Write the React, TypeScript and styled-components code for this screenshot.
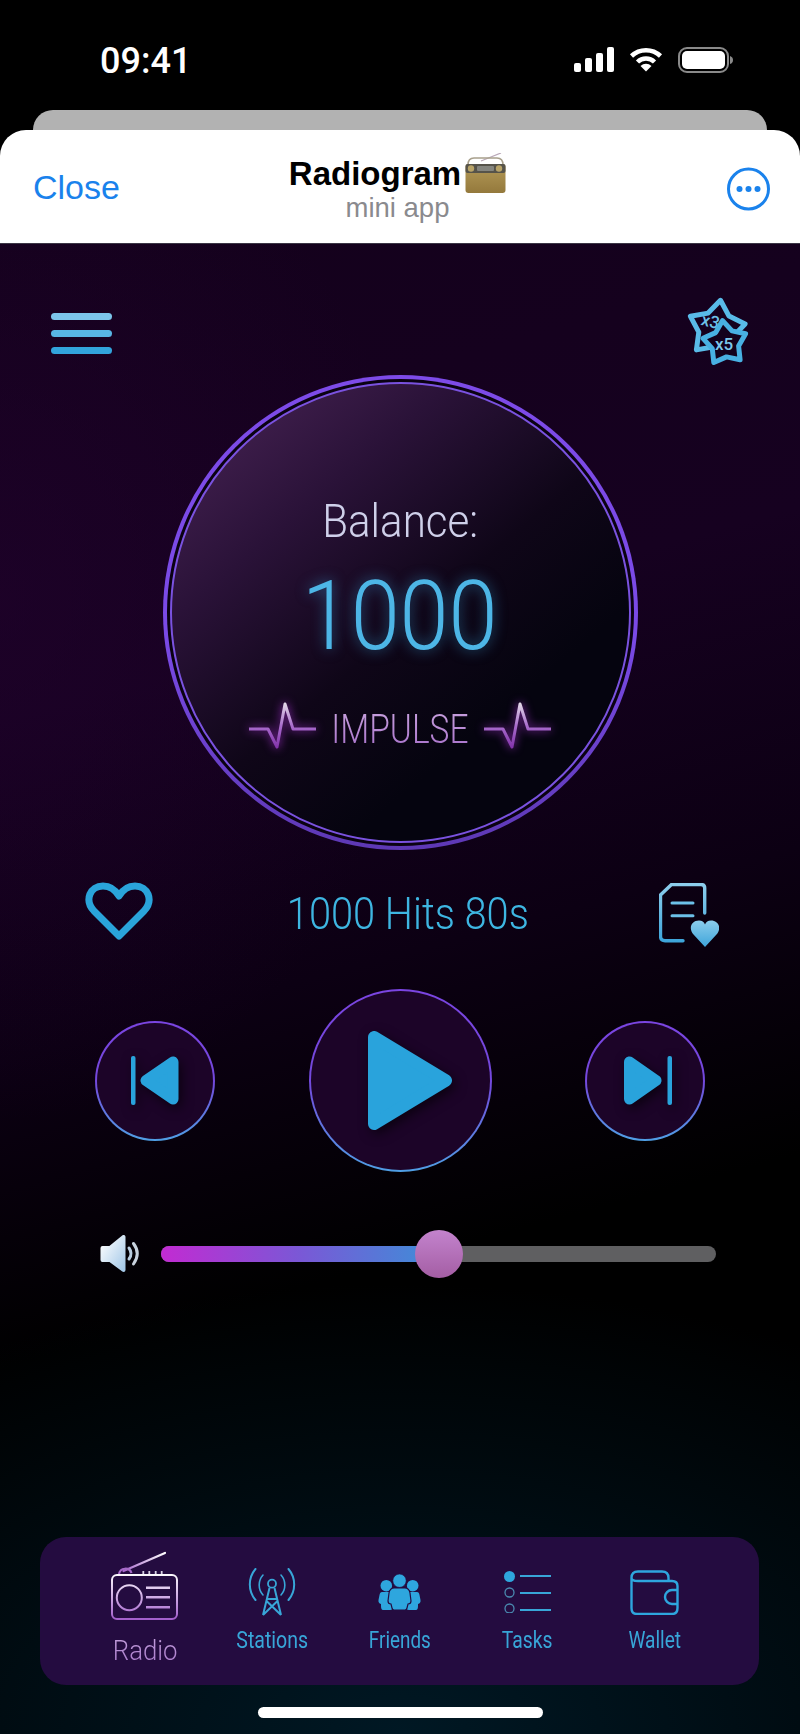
import React from "react";
import styled, { createGlobalStyle } from "styled-components";

const NARROW = `Roboto, "Liberation Sans", sans-serif`;
const SYSTEM = `"Liberation Sans", Arial, sans-serif`;

const Global = createGlobalStyle`
  html, body { margin: 0; padding: 0; background: #000; }
  * { box-sizing: border-box; }
`;

const Page = styled.div`
  width: 800px;
  height: 1734px;
  display: flex;
  flex-direction: column;
  background: #000;
  overflow: hidden;
`;

const StatusBar = styled.div`
  height: 110px;
  flex: none;
  display: flex;
  justify-content: space-between;
  align-items: flex-start;
  padding: 40px 67px 0 100px;
`;
const Clock = styled.div`
  font: 500 36px/42px ${NARROW};
  color: #fff;
`;
const StatusIcons = styled.div`
  display: flex;
  gap: 15px;
  padding-top: 7px;
`;
const BackSheet = styled.div`
  height: 20px;
  flex: none;
  margin: 0 33px;
  background: #b2b2b2;
  border-radius: 20px 20px 0 0;
`;
const Header = styled.header`
  height: 114px;
  flex: none;
  background: #fff;
  border-radius: 26px 26px 0 0;
  display: grid;
  grid-template-columns: 1fr auto 1fr;
  align-items: center;
  padding: 0 30px 0 33px;
  border-bottom: 1px solid #3b3645;
`;
const CloseLabel = styled.div`
  font: 400 34px/40px ${SYSTEM};
  color: #1a82ec;
`;
const TitleBlock = styled.div`
  display: flex;
  flex-direction: column;
  align-items: center;
  padding: 3px 8px 0 0;
`;
const TitleRow = styled.div`
  display: flex;
  align-items: flex-end;
  gap: 4px;
  font: 700 33px/38px ${SYSTEM};
  color: #000;
`;
const Subtitle = styled.div`
  font: 400 27.5px/30px ${SYSTEM};
  color: #8a8a8e;
`;
const MoreSlot = styled.div`
  display: flex;
  justify-content: flex-end;
  padding-top: 4px;
`;

const Main = styled.main`
  flex: 1;
  display: flex;
  flex-direction: column;
  background:
    radial-gradient(ellipse 800px 450px at 50% 100%, #001824 0%, rgba(0, 24, 36, 0) 100%),
    radial-gradient(ellipse 420px 520px at 0% 24%, rgba(34, 2, 46, 0.55) 0%, rgba(34, 2, 46, 0) 100%),
    linear-gradient(165deg, #14011c 0%, #160120 28%, #0c0013 48%, #000 66%);
`;
const TopBar = styled.div`
  display: flex;
  justify-content: space-between;
  align-items: center;
  padding: 53px 52px 0 51px;
`;
const Burger = styled.div`
  width: 61px;
  margin-top: 2px;
  display: flex;
  flex-direction: column;
  gap: 10px;
`;
const BurgerLine = styled.div<{ $c: string }>`
  height: 7px;
  border-radius: 4px;
  background: ${(p) => p.$c};
`;

const Dial = styled.div`
  width: 475px;
  height: 475px;
  margin: 8px auto 0;
  flex: none;
  border-radius: 50%;
  padding: 3px;
  border: 4px solid transparent;
  background:
    linear-gradient(#0a0212, #0a0212) padding-box,
    linear-gradient(180deg, #7d4be8 0%, #7a4ae6 55%, #5d38b4 100%) border-box;
`;
const Face = styled.div`
  width: 100%;
  height: 100%;
  border-radius: 50%;
  border: 2px solid #7a52df;
  background: linear-gradient(140deg, #42204f 8%, #2a1238 28%, #0f0618 52%, #05040f 72%);
  display: flex;
  flex-direction: column;
  align-items: center;
  padding-top: 110px;
`;
const Narrow = styled.span<{ $sx: number }>`
  display: inline-block;
  white-space: nowrap;
  font-family: ${NARROW};
  font-weight: 300;
  transform: scaleX(${(p) => p.$sx});
`;
const BalanceLabel = styled(Narrow)`
  font-size: 46px;
  line-height: 54px;
  color: #cfd0ea;
`;
const BalanceValue = styled(Narrow)`
  font-size: 97px;
  line-height: 114px;
  margin-top: 11px;
  color: #4db6e6;
  text-shadow: 0 0 14px rgba(60, 170, 230, 0.55);
`;
const ImpulseRow = styled.div`
  display: flex;
  gap: 2px;
  margin-top: 33px;
  height: 47px;
`;
const ImpulseLabel = styled(Narrow)`
  font-size: 40px;
  line-height: 47px;
  background: linear-gradient(180deg, #cba6df, #a56dc9);
  -webkit-background-clip: text;
  background-clip: text;
  color: transparent;
`;
const PulseIcon = styled.svg`
  width: 67px;
  height: 50px;
  margin-top: -5px;
  overflow: visible;
  filter: drop-shadow(0 0 5px rgba(170, 50, 215, 0.9));
`;

const TrackRow = styled.div`
  display: flex;
  justify-content: space-between;
  align-items: flex-start;
  margin-top: 32px;
  height: 64px;
  padding: 0 81px 0 85px;
`;
const TrackTitle = styled(Narrow)`
  font-size: 44px;
  line-height: 52px;
  margin: 6px 0 0 3px;
  color: #3eb6e2;
`;
const DocSlot = styled.div`
  margin-top: 1px;
`;

const Controls = styled.div`
  display: flex;
  justify-content: space-between;
  align-items: center;
  margin-top: 43px;
  padding: 0 95px;
`;
const RoundButton = styled.div<{ $size: number }>`
  width: ${(p) => p.$size}px;
  height: ${(p) => p.$size}px;
  flex: none;
  border-radius: 50%;
  border: 2px solid transparent;
  background:
    linear-gradient(#1c0428, #1c0428) padding-box,
    linear-gradient(180deg, #7b45e2 0%, #7348dc 50%, #4f9fe4 100%) border-box;
  display: flex;
  align-items: center;
  justify-content: center;
`;
const PressIcon = styled.svg<{ $shift: number }>`
  margin-left: ${(p) => p.$shift}px;
  overflow: visible;
  filter: drop-shadow(3px 4px 6px rgba(0, 0, 0, 0.6));
`;

const VolumeRow = styled.div`
  display: flex;
  align-items: center;
  gap: 20px;
  margin-top: 57px;
  height: 49px;
  padding: 0 84px 0 100px;
`;
const VolumeTrack = styled.div`
  position: relative;
  flex: 1;
  height: 16px;
  border-radius: 8px;
  background: #5f5f61;
`;
const VolumeFill = styled.div`
  height: 100%;
  border-radius: 8px 0 0 8px;
  background: linear-gradient(90deg, #c22bd2 0%, #7a58d6 50%, #3d8fd8 100%);
`;
const VolumeThumb = styled.div`
  position: absolute;
  top: 50%;
  width: 48px;
  height: 48px;
  margin: -24px 0 0 -24px;
  border-radius: 50%;
  background: linear-gradient(180deg, #c383cd 0%, #a45ea4 100%);
`;

const BottomNav = styled.nav`
  margin: auto 41px 0 40px;
  height: 148px;
  flex: none;
  border-radius: 26px;
  background: #240c40;
  display: grid;
  grid-template-columns: repeat(5, 127.5px);
  padding-left: 41px;
`;
const NavItem = styled.div<{ $active?: boolean }>`
  display: flex;
  flex-direction: column;
  align-items: center;
  padding-top: ${(p) => (p.$active ? 16 : 31)}px;
`;
const NavIconBox = styled.div`
  height: 48px;
  display: flex;
  align-items: center;
  justify-content: center;
`;
const ActiveIconBox = styled.div`
  height: 66px;
`;
const NavLabel = styled(Narrow)`
  font-size: 23px;
  font-weight: 400;
  line-height: 27px;
  margin-top: 11px;
  color: #38a6d8;
`;
const ActiveNavLabel = styled(Narrow)`
  font-size: 28px;
  line-height: 33px;
  margin-top: 15px;
  background: linear-gradient(180deg, #c6a4de, #a574c8);
  -webkit-background-clip: text;
  background-clip: text;
  color: transparent;
`;
const HomeIndicator = styled.div`
  width: 285px;
  height: 11px;
  flex: none;
  margin: 22px auto 16px;
  border-radius: 6px;
  background: #fff;
`;

const starPoints = (cx: number, cy: number, r: number, rot: number) => {
  const pts: string[] = [];
  for (let i = 0; i < 10; i++) {
    const rad = i % 2 === 0 ? r : r * 0.62;
    const a = ((rot + i * 36 - 90) * Math.PI) / 180;
    pts.push(`${(cx + rad * Math.cos(a)).toFixed(1)},${(cy + rad * Math.sin(a)).toFixed(1)}`);
  }
  return pts.join(" ");
};

const SignalIcon = () => (
  <svg width="40" height="25" viewBox="0 0 40 25">
    <rect x="0" y="16" width="7" height="9" rx="2" fill="#fff" />
    <rect x="11" y="11" width="7" height="14" rx="2" fill="#fff" />
    <rect x="22" y="6" width="7" height="19" rx="2" fill="#fff" />
    <rect x="33" y="0" width="7" height="25" rx="2" fill="#fff" />
  </svg>
);
const WifiIcon = () => (
  <svg width="34" height="25" viewBox="0 0 34 25" fill="none">
    <path d="M2.5 9 A 21 21 0 0 1 31.5 9" stroke="#fff" strokeWidth="4.5" />
    <path d="M8.5 15 A 12 12 0 0 1 25.5 15" stroke="#fff" strokeWidth="4.5" />
    <path d="M17 24.5 L11.5 19 A 8 8 0 0 1 22.5 19 Z" fill="#fff" />
  </svg>
);
const BatteryIcon = () => (
  <svg width="55" height="26" viewBox="0 0 55 26">
    <rect x="1" y="1" width="49" height="24" rx="8" fill="none" stroke="#8a8a8a" strokeWidth="2" />
    <rect x="4" y="4" width="43" height="18" rx="5" fill="#fff" />
    <path d="M52 9 Q55 10 55 13 Q55 16 52 17 Z" fill="#8a8a8a" />
  </svg>
);
const RadioEmoji = () => (
  <svg width="41" height="40" viewBox="0 0 41 40">
    <defs>
      <linearGradient id="emo" x1="0" y1="0" x2="0" y2="1">
        <stop offset="0" stopColor="#b49a58" />
        <stop offset="1" stopColor="#94793c" />
      </linearGradient>
    </defs>
    <path d="M16 8 L36 0" stroke="#b9a8b8" strokeWidth="1.3" />
    <path d="M3 12 Q3 5 9 5 H32 Q38 5 38 12" fill="none" stroke="#a8a08c" strokeWidth="1.6" />
    <rect x="0.5" y="11" width="40" height="29" rx="3" fill="url(#emo)" />
    <rect x="0.5" y="11" width="40" height="9" rx="2" fill="#56534a" />
    <circle cx="6" cy="15.5" r="3.2" fill="#b9a468" />
    <circle cx="34" cy="15.5" r="3.2" fill="#b9a468" />
    <rect x="12" y="13" width="17" height="5" rx="1" fill="#85857f" />
  </svg>
);
const MoreIcon = () => (
  <svg width="43" height="44" viewBox="0 0 43 44">
    <circle cx="21.5" cy="22" r="20" fill="none" stroke="#1a82ec" strokeWidth="3" />
    <circle cx="12.5" cy="22" r="3" fill="#1a82ec" />
    <circle cx="21.5" cy="22" r="3" fill="#1a82ec" />
    <circle cx="30.5" cy="22" r="3" fill="#1a82ec" />
  </svg>
);
const StarsIcon = () => (
  <svg width="60" height="70" viewBox="0 0 60 70" style={{ overflow: "visible" }}>
    <polygon points={starPoints(28.5, 32, 29, 8)} fill="none" stroke="#59bbe8" strokeWidth="5" strokeLinejoin="round" />
    <text x="13" y="30" fontFamily={NARROW} fontWeight="500" fontSize="17" fill="#6cc0e8" transform="rotate(14 22 26)">x3</text>
    <polygon points={starPoints(37, 46, 22.5, -6)} fill="#13011c" stroke="#48b0e2" strokeWidth="5" strokeLinejoin="round" />
    <text x="27" y="53" fontFamily={NARROW} fontWeight="500" fontSize="17" fill="#7cc8ec">x5</text>
  </svg>
);
const Pulse = ({ id }: { id: string }) => (
  <PulseIcon viewBox="0 0 67 50">
    <defs>
      <linearGradient id={id} gradientUnits="userSpaceOnUse" x1="0" y1="2" x2="0" y2="48">
        <stop offset="0" stopColor="#e4dce8" />
        <stop offset="0.5" stopColor="#a86ccc" />
        <stop offset="1" stopColor="#8030a8" />
      </linearGradient>
    </defs>
    <path d="M0 28 H19 L28 46 L36 3 L44 28 H67" fill="none" stroke={`url(#${id})`} strokeWidth="3" strokeLinejoin="round" />
  </PulseIcon>
);
const HeartIcon = () => (
  <svg width="68" height="58" viewBox="0 0 68 58">
    <path
      d="M34 54 L9 29 C-1 18 5 4 18 4 C26 4 31 9 34 14 C37 9 42 4 50 4 C63 4 69 18 59 29 Z"
      fill="none"
      stroke="#2aa4da"
      strokeWidth="7"
      strokeLinejoin="round"
    />
  </svg>
);
const DocHeartIcon = () => (
  <svg width="60" height="64" viewBox="0 0 60 64">
    <defs>
      <linearGradient id="doc" x1="0" y1="0" x2="0" y2="1">
        <stop offset="0" stopColor="#8ccdec" />
        <stop offset="1" stopColor="#3ea5da" />
      </linearGradient>
    </defs>
    <path
      d="M24 57.7 H6 Q1.5 57.7 1.5 53 V12 L12.5 1.5 H42 Q45.7 1.5 45.7 5 V30"
      fill="none"
      stroke="url(#doc)"
      strokeWidth="3.4"
      strokeLinecap="round"
    />
    <path d="M13 20 H34 M13 32.7 H34" stroke="#6cc0e8" strokeWidth="3" strokeLinecap="round" />
    <path
      d="M46 64 L34.5 51.5 C29 45 32.5 37.5 40 37.5 C43 37.5 45 39 46 41.5 C47 39 49 37.5 52 37.5 C59.5 37.5 63 45 57.5 51.5 Z"
      fill="url(#doc)"
    />
  </svg>
);
const PlayIcon = () => (
  <PressIcon $shift={20} width="86" height="101" viewBox="0 0 86 101">
    <polygon points="7,7 7,94 79,50.5" fill="#29a3dc" stroke="#29a3dc" strokeWidth="12" strokeLinejoin="round" />
  </PressIcon>
);
const PrevIcon = () => (
  <PressIcon $shift={0} width="48" height="49" viewBox="0 0 48 49">
    <rect x="0" y="0" width="4.5" height="49" rx="2" fill="#29a3dc" />
    <polygon points="42,6 42,43 15,24.5" fill="#29a3dc" stroke="#29a3dc" strokeWidth="11" strokeLinejoin="round" />
  </PressIcon>
);
const NextIcon = () => (
  <PressIcon $shift={6} width="48" height="49" viewBox="0 0 48 49">
    <rect x="43.5" y="0" width="4.5" height="49" rx="2" fill="#29a3dc" />
    <polygon points="5.5,6 5.5,43 32,24.5" fill="#29a3dc" stroke="#29a3dc" strokeWidth="11" strokeLinejoin="round" />
  </PressIcon>
);
const SpeakerIcon = () => (
  <svg width="41" height="37" viewBox="0 0 41 37" style={{ flex: "none" }}>
    <defs>
      <linearGradient id="spk" x1="0" y1="0" x2="1" y2="1">
        <stop offset="0" stopColor="#fff" />
        <stop offset="1" stopColor="#a5c9e8" />
      </linearGradient>
    </defs>
    <path d="M2.5 13 H10 L23.5 2 V35 L10 25 H2.5 Z" fill="url(#spk)" stroke="url(#spk)" strokeWidth="4" strokeLinejoin="round" />
    <path d="M29 13 Q33 18.5 29 24" fill="none" stroke="#b9cde0" strokeWidth="3" strokeLinecap="round" />
    <path d="M33.5 8.5 Q41 18.5 33.5 29" fill="none" stroke="#c8d2de" strokeWidth="3" strokeLinecap="round" />
  </svg>
);
const RadioNavIcon = () => (
  <svg width="67" height="66" viewBox="0 0 67 66" style={{ overflow: "visible" }}>
    <defs>
      <linearGradient id="radB" gradientUnits="userSpaceOnUse" x1="0" y1="20" x2="0" y2="66">
        <stop offset="0" stopColor="#fff" />
        <stop offset="1" stopColor="#a35fcc" />
      </linearGradient>
      <linearGradient id="radA" gradientUnits="userSpaceOnUse" x1="10" y1="20" x2="54" y2="0">
        <stop offset="0" stopColor="#a05cc8" />
        <stop offset="1" stopColor="#fff" />
      </linearGradient>
    </defs>
    <path d="M12.5 18 L54 0" stroke="url(#radA)" strokeWidth="2.2" strokeLinecap="round" />
    <path d="M8 21 A 6.5 6.5 0 0 1 20.5 20" fill="none" stroke="#a66ac8" strokeWidth="2.2" />
    <path d="M32.3 18 V21 M38.3 18 V21 M44.7 18 V21 M50.7 18 V21" stroke="#d8d0e4" strokeWidth="1.8" />
    <rect x="1" y="22" width="65" height="44" rx="5" fill="none" stroke="url(#radB)" strokeWidth="2" />
    <circle cx="18.3" cy="44.7" r="12.5" fill="none" stroke="url(#radB)" strokeWidth="2" />
    <path d="M35 34.7 H59 M35 44.3 H59 M35 54.3 H59" stroke="url(#radB)" strokeWidth="2.4" />
  </svg>
);
const StationsIcon = () => (
  <svg width="48" height="48" viewBox="0 0 48 48" fill="none" stroke="#38a6d8" strokeWidth="2">
    <path d="M7.5 1 A 24 24 0 0 0 7.5 32" strokeLinecap="round" />
    <path d="M40.5 1 A 24 24 0 0 1 40.5 32" strokeLinecap="round" />
    <path d="M15 7 A 15 15 0 0 0 15 27" strokeWidth="1.6" strokeLinecap="round" />
    <path d="M33 7 A 15 15 0 0 1 33 27" strokeWidth="1.6" strokeLinecap="round" />
    <circle cx="24" cy="15.7" r="4" strokeWidth="1.8" />
    <path d="M21.5 20 L15 47 M26.5 20 L33 47 M18.5 33 L33 47 M29.5 33 L15 47 M19 31 H29" strokeWidth="2" />
  </svg>
);
const FriendsIcon = () => (
  <svg width="43" height="36" viewBox="0 0 43 36" fill="#2ea6de">
    <circle cx="8.3" cy="11.7" r="5.8" />
    <circle cx="34.7" cy="11.7" r="5.8" />
    <path d="M4 18 H13 Q15 19 15 22 V33 Q15 36 12 36 H5 Q3 36 3 32 L3 30 Q0 29 0.5 26 L1.5 21 Q2 18 4 18 Z" />
    <path d="M30 18 H39 Q41 18 41.5 21 L42.5 26 Q43 29 40 30 L40 32 Q40 36 38 36 H31 Q28 36 28 33 V22 Q28 19 30 18 Z" />
    <circle cx="21.5" cy="6.7" r="6.7" stroke="#240c40" strokeWidth="0.6" />
    <path d="M16 14 H27 Q31 14 32 19 L33 27 Q33 30 30 30 L29 34 Q28.5 36 27 36 H16 Q14.5 36 14 34 L13 30 Q10 30 10 27 L11 19 Q12 14 16 14 Z" stroke="#240c40" strokeWidth="1.2" />
  </svg>
);
const TasksIcon = () => (
  <svg width="47" height="42" viewBox="0 0 47 42" stroke="#38a6d8">
    <circle cx="5.5" cy="5.5" r="5.5" fill="#2ea6de" stroke="none" />
    <circle cx="5.5" cy="21.5" r="4.5" fill="none" strokeWidth="1.3" stroke="#4a8ab0" />
    <circle cx="5.5" cy="37.5" r="4.5" fill="none" strokeWidth="1.3" stroke="#4a8ab0" />
    <path d="M16 5 H47 M16 22 H47 M16 39 H47" strokeWidth="1.8" />
  </svg>
);
const WalletIcon = () => (
  <svg width="49" height="45" viewBox="0 0 49 45" fill="none" stroke="#2ea6de" strokeWidth="2.4">
    <path d="M1.5 8 Q1.5 1.5 8 1.5 H32 Q38.5 1.5 38.5 8 V11" />
    <path d="M1.5 8 Q1.5 11 8 11 H42 Q47.5 11 47.5 16 V38 Q47.5 44 42 44 H7 Q1.5 44 1.5 38 Z" />
    <path d="M47.5 20 H42 A 7 7 0 0 0 42 34 H47.5" />
  </svg>
);

const NAV_ITEMS = [
  { label: "Stations", icon: <StationsIcon />, sx: 0.85 },
  { label: "Friends", icon: <FriendsIcon />, sx: 0.82 },
  { label: "Tasks", icon: <TasksIcon />, sx: 0.84 },
  { label: "Wallet", icon: <WalletIcon />, sx: 0.83 },
];

const VOLUME = 50;

export default function App() {
  return (
    <Page>
      <Global />
      <StatusBar>
        <Clock>09:41</Clock>
        <StatusIcons>
          <SignalIcon />
          <WifiIcon />
          <BatteryIcon />
        </StatusIcons>
      </StatusBar>
      <BackSheet />
      <Header>
        <CloseLabel>Close</CloseLabel>
        <TitleBlock>
          <TitleRow>
            Radiogram
            <RadioEmoji />
          </TitleRow>
          <Subtitle>mini app</Subtitle>
        </TitleBlock>
        <MoreSlot>
          <MoreIcon />
        </MoreSlot>
      </Header>
      <Main>
        <TopBar>
          <Burger>
            <BurgerLine $c="#7cc5ea" />
            <BurgerLine $c="#58b5e4" />
            <BurgerLine $c="#32a4dc" />
          </Burger>
          <StarsIcon />
        </TopBar>
        <Dial>
          <Face>
            <BalanceLabel $sx={0.915}>Balance:</BalanceLabel>
            <BalanceValue $sx={0.91}>1000</BalanceValue>
            <ImpulseRow>
              <Pulse id="p1" />
              <ImpulseLabel $sx={0.837}>IMPULSE</ImpulseLabel>
              <Pulse id="p2" />
            </ImpulseRow>
          </Face>
        </Dial>
        <TrackRow>
          <HeartIcon />
          <TrackTitle $sx={0.904}>1000 Hits 80s</TrackTitle>
          <DocSlot>
            <DocHeartIcon />
          </DocSlot>
        </TrackRow>
        <Controls>
          <RoundButton $size={120}>
            <PrevIcon />
          </RoundButton>
          <RoundButton $size={183}>
            <PlayIcon />
          </RoundButton>
          <RoundButton $size={120}>
            <NextIcon />
          </RoundButton>
        </Controls>
        <VolumeRow>
          <SpeakerIcon />
          <VolumeTrack>
            <VolumeFill style={{ width: `${VOLUME}%` }} />
            <VolumeThumb style={{ left: `${VOLUME}%` }} />
          </VolumeTrack>
        </VolumeRow>
        <BottomNav>
          <NavItem $active>
            <ActiveIconBox>
              <RadioNavIcon />
            </ActiveIconBox>
            <ActiveNavLabel $sx={0.92}>Radio</ActiveNavLabel>
          </NavItem>
          {NAV_ITEMS.map((item) => (
            <NavItem key={item.label}>
              <NavIconBox>{item.icon}</NavIconBox>
              <NavLabel $sx={item.sx}>{item.label}</NavLabel>
            </NavItem>
          ))}
        </BottomNav>
        <HomeIndicator />
      </Main>
    </Page>
  );
}
